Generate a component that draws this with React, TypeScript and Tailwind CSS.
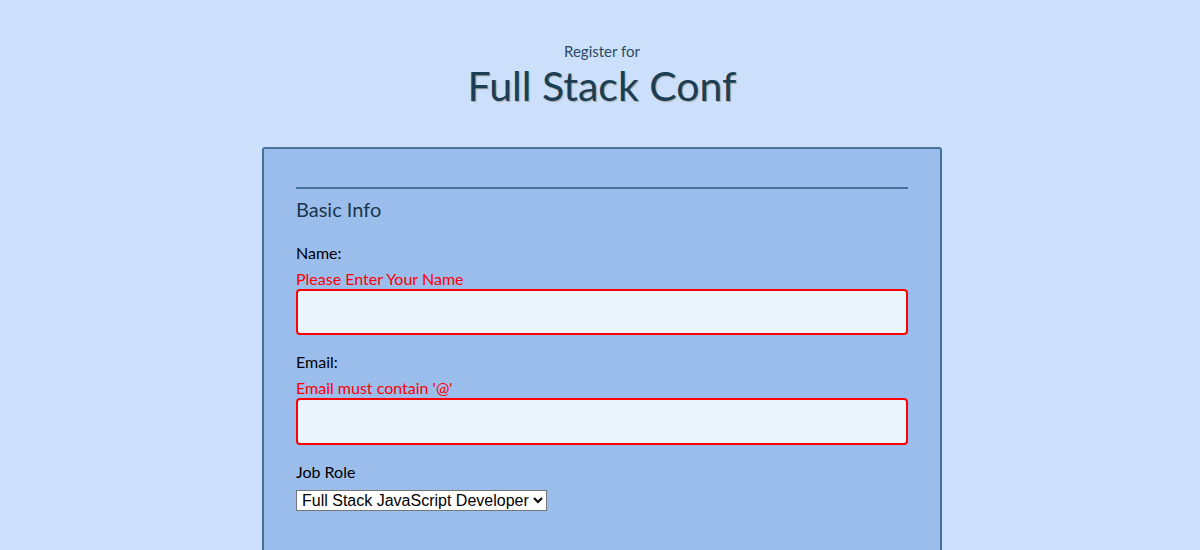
import React from "react";

export default function App() {
  return (
    <div className="min-h-[550px] w-full bg-[#cce0fb] pl-[4px] text-[#000]" style={{ fontFamily: "Lato, 'Noto Sans', sans-serif" }}>
      <header className="flex flex-col items-center pt-[40px]">
        <span className="text-[15px] leading-[22px] text-[#2e4b63]">Register for</span>
        <h1 className="text-[41px] leading-[48px] text-[#1c3e54] [text-shadow:1px_1px_1px_rgba(120,100,60,0.45)]">Full Stack Conf</h1>
      </header>
      <div className="mx-auto mt-[37px] w-[680px] rounded-[3px] border-2 border-[#47739a] bg-[#9bbdec] px-[32px] pt-[38px] pb-[40px]">
        <div className="border-t-2 border-[#47739a]" />
        <h2 className="mt-[7px] text-[20px] leading-[26px] text-[#1a364c]">Basic Info</h2>
        <div className="mt-[21px] text-[16px] leading-[20px]">Name:</div>
        <div className="mt-[6px] text-[16px] leading-[20px] text-[#ff0000]">Please Enter Your Name</div>
        <div className="h-[46px] w-full rounded-[4px] border-2 border-[#ff0000] bg-[#eaf6fc]" />
        <div className="mt-[17px] text-[16px] leading-[20px]">Email:</div>
        <div className="mt-[6px] text-[16px] leading-[20px] text-[#ff0000]">Email must contain '@'</div>
        <div className="h-[47px] w-full rounded-[4px] border-2 border-[#ff0000] bg-[#eaf6fc]" />
        <div className="mt-[17px] text-[16px] leading-[20px]">Job Role</div>
        <select
          className="mt-[8px] h-[21px] border border-[#767676] bg-white px-[1px] text-[16px] leading-[18px] text-black"
          style={{ fontFamily: "'Liberation Sans', Arial, sans-serif" }}
          defaultValue="fsjs"
        >
          <option value="fsjs">Full Stack JavaScript Developer</option>
        </select>
      </div>
    </div>
  );
}
